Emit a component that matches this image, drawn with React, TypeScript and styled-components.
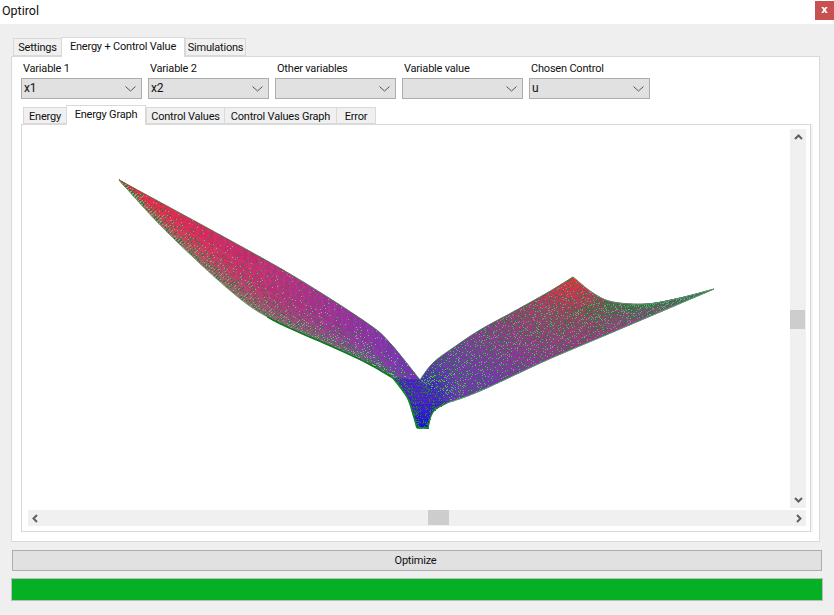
import React, { useMemo } from "react";
import styled, { createGlobalStyle } from "styled-components";

const Global = createGlobalStyle`
  html, body { margin: 0; padding: 0; background: #efefef; }
  body { font-family: Roboto, "Open Sans", "Liberation Sans", sans-serif; font-size: 11px; letter-spacing: -0.2px; color: #111; }
`;

const Window = styled.div`
  width: 834px; height: 615px; overflow: hidden; background: #efefef;
  display: flex; flex-direction: column;
`;
const TitleBar = styled.div`
  height: 24px; background: #fff; display: flex; align-items: flex-start; justify-content: space-between; flex: none;
`;
const Title = styled.span`
  font-size: 12.5px; letter-spacing: 0; line-height: 21px; padding-left: 2px;
`;
const CloseButton = styled.div`
  width: 19px; height: 19px; margin-top: 1px; background: #c75050; color: #fff; letter-spacing: 0;
  font: bold 10px/18px "DejaVu Sans", sans-serif; text-align: center;
`;
const Body = styled.div`
  flex: 1; padding: 12px 11px 0 11px; display: flex; flex-direction: column;
`;
const TabRow = styled.div<{ $inset: number; $h: number }>`
  display: flex; align-items: flex-end; height: ${p => p.$h}px; padding-left: ${p => p.$inset}px; position: relative; z-index: 1;
`;
const Tab = styled.div<{ $active?: boolean; $w: number; $h: number }>`
  box-sizing: border-box; width: ${p => p.$w}px; height: ${p => (p.$active ? p.$h + 2 : p.$h)}px;
  margin-bottom: ${p => (p.$active ? -1 : 0)}px;
  background: ${p => (p.$active ? "#fff" : "#f0f0f0")};
  border: 1px solid #d9d9d9; border-bottom: ${p => (p.$active ? "none" : "1px solid #d9d9d9")};
  border-right-width: ${p => (p.$active ? 1 : 0)}px;
  text-align: center; line-height: ${p => (p.$active ? p.$h - 1 : p.$h)}px; white-space: nowrap;
  &:last-child { border-right-width: 1px; }
`;
const OuterPanel = styled.div`
  box-sizing: border-box; width: 809px; height: 486px; background: #fff; border: 1px solid #d9d9d9;
  padding: 4px 0 0 9px; display: flex; flex-direction: column;
`;
const Selectors = styled.div`
  display: flex; gap: 6px; height: 38px; flex: none;
`;
const Field = styled.div`
  width: 121px; display: flex; flex-direction: column;
`;
const FieldLabel = styled.label`
  height: 17px; line-height: 16px; padding-left: 2px; white-space: nowrap;
`;
const Select = styled.div`
  box-sizing: border-box; height: 21px; background: #e1e1e1; border: 1px solid #adadad;
  display: flex; align-items: center; justify-content: space-between; padding: 0 5px 0 2px; line-height: 19px; font-size: 12px;
`;
const InnerTabs = styled.div`
  margin-top: 5px;
`;
const InnerPanel = styled.div`
  box-sizing: border-box; width: 790px; height: 408px; margin-left: 0; background: #fff;
  border: 1px solid #d9d9d9; box-shadow: 2px 0 0 #f3f3f3;
  padding: 4px 4px 5px 0;
  display: grid; grid-template-columns: 768px 16px; grid-template-rows: 379px 16px; row-gap: 2px;
`;
const PlotSvg = styled.svg`
  display: block; width: 768px; height: 379px;
`;
const VScroll = styled.div`
  background: #f0f0f0; display: flex; flex-direction: column; align-items: center; justify-content: space-between;
  position: relative; padding: 4px 0;
`;
const VThumb = styled.div`
  position: absolute; left: 0; top: 181px; width: 15px; height: 19px; background: #cdcdcd;
`;
const HScroll = styled.div`
  grid-column: 1 / -1; margin-left: 6px; background: #f0f0f0; display: flex; align-items: center; justify-content: space-between;
  position: relative; padding: 0 3px 0 3px;
`;
const HThumb = styled.div`
  position: absolute; left: 400px; top: 0; width: 21px; height: 15px; background: #cdcdcd;
`;
const OptimizeButton = styled.div`
  box-sizing: border-box; width: 810px; height: 21px; margin: 8px 0 0 1px; padding-right: 3px; background: #e1e1e1; border: 1px solid #adadad;
  text-align: center; line-height: 20px;
`;
const Progress = styled.div`
  box-sizing: border-box; width: 812px; height: 23px; margin-top: 7px; background: #06b025; border: 1px solid #bcbcbc;
`;

type P = [number, number];

const smooth = (line: P[]): P[] => {
  const out: P[] = [];
  for (let i = 0; i < line.length - 1; i++) {
    const p0 = line[Math.max(0, i - 1)], p1 = line[i], p2 = line[i + 1], p3 = line[Math.min(line.length - 1, i + 2)];
    for (let k = 0; k < 8; k++) {
      const t = k / 8, t2 = t * t, t3 = t2 * t;
      out.push([
        0.5 * (2 * p1[0] + (p2[0] - p0[0]) * t + (2 * p0[0] - 5 * p1[0] + 4 * p2[0] - p3[0]) * t2 + (3 * p1[0] - p0[0] - 3 * p2[0] + p3[0]) * t3),
        0.5 * (2 * p1[1] + (p2[1] - p0[1]) * t + (2 * p0[1] - 5 * p1[1] + 4 * p2[1] - p3[1]) * t2 + (3 * p1[1] - p0[1] - 3 * p2[1] + p3[1]) * t3),
      ]);
    }
  }
  out.push(line[line.length - 1]);
  return out;
};

const at = (line: P[], t: number): P => {
  const lens: number[] = [];
  let total = 0;
  for (let i = 1; i < line.length; i++) {
    const l = Math.hypot(line[i][0] - line[i - 1][0], line[i][1] - line[i - 1][1]);
    lens.push(l); total += l;
  }
  let d = t * total;
  for (let i = 0; i < lens.length; i++) {
    if (d <= lens[i] || i === lens.length - 1) {
      const f = lens[i] ? d / lens[i] : 0;
      return [line[i][0] + (line[i + 1][0] - line[i][0]) * f, line[i][1] + (line[i + 1][1] - line[i][1]) * f];
    }
    d -= lens[i];
  }
  return line[line.length - 1];
};
type C = [number, number, number];
const mix = (a: C, b: C, t: number): C => {
  const k = Math.max(0, Math.min(1, t));
  return [a[0] + (b[0] - a[0]) * k, a[1] + (b[1] - a[1]) * k, a[2] + (b[2] - a[2]) * k];
};
const RED: C = [245, 40, 65];
const PINK: C = [195, 45, 115];
const PURPLE: C = [128, 50, 180];
const BLUE: C = [60, 20, 205];

const LEFT_UP = smooth([[119, 180], [233, 242], [300, 280], [367, 323], [390, 343], [420, 380]]);
const LEFT_LOW = smooth([[119, 180], [167, 232], [233, 293], [273, 320], [333, 347], [367, 363], [393, 378]]);
const RIGHT_A = smooth([[420, 380], [433, 363], [453, 348], [480, 330], [513, 312], [547, 293], [573, 277]]);
const RIGHT_B = smooth([[447, 403], [480, 391], [547, 360], [613, 332], [714, 289]]);
const RIGHT_C = smooth([[573, 277], [593, 293], [613, 302], [647, 304], [680, 298], [714, 289]]);
const MID_L = smooth([[393, 378], [407, 397], [413, 414], [417, 428]]);
const MID_R = smooth([[420, 380], [447, 403]]).concat(smooth([[447, 403], [436, 409], [431, 416], [428, 428]]).slice(1));

const rnd = (i: number, j: number) => {
  const s = Math.sin(i * 12.9898 + j * 78.233) * 43758.5453;
  return s - Math.floor(s);
};

type Surface = {
  nu: number; nv: number;
  pos: (u: number, v: number) => P;
  col: (u: number, v: number, p: P) => C;
  dots: (u: number, v: number) => number;
  step: number;
};

const build = (s: Surface) => {
  const fills = new Map<string, string>();
  let lines = "";
  let dots = "";
  let greens = "";
  for (let i = 0; i < s.nu; i++) {
    for (let j = 0; j < s.nv; j++) {
      const u0 = i / s.nu, u1 = (i + 1) / s.nu, v0 = j / s.nv, v1 = (j + 1) / s.nv;
      const a = s.pos(u0, v0), b = s.pos(u1, v0), c = s.pos(u1, v1), d = s.pos(u0, v1);
      const mid: P = [(a[0] + c[0]) / 2, (a[1] + c[1]) / 2];
      const cc = s.col((u0 + u1) / 2, (v0 + v1) / 2, mid);
      const key = `rgb(${Math.round(cc[0] / 6) * 6},${Math.round(cc[1] / 6) * 6},${Math.round(cc[2] / 6) * 6})`;
      const q = `M${a[0].toFixed(1)} ${a[1].toFixed(1)}L${b[0].toFixed(1)} ${b[1].toFixed(1)}L${c[0].toFixed(1)} ${c[1].toFixed(1)}L${d[0].toFixed(1)} ${d[1].toFixed(1)}Z`;
      fills.set(key, (fills.get(key) || "") + q);
      if (i % s.step === 0) lines += `M${a[0].toFixed(1)} ${a[1].toFixed(1)}L${d[0].toFixed(1)} ${d[1].toFixed(1)}`;
      if (rnd(i, j) < s.dots((u0 + u1) / 2, (v0 + v1) / 2)) dots += `M${Math.round(mid[0])} ${Math.round(mid[1]) + 0.5}h1`;
      if (rnd(j + 3, i + 7) < s.dots((u0 + u1) / 2, (v0 + v1) / 2)) greens += `M${Math.round(b[0])} ${Math.round(b[1]) + 0.5}h1`;
    }
  }
  return { fills: Array.from(fills.entries()), lines, dots, greens };
};

const leftWing: Surface = {
  nu: 120, nv: 28, step: 3,
  pos: (u, v) => {
    const a = at(LEFT_UP, u), b = at(LEFT_LOW, u);
    const w = Math.pow(v, 0.8);
    return [a[0] + (b[0] - a[0]) * w, a[1] + (b[1] - a[1]) * w];
  },
  col: (u, v, p) => {
    const x = (p[0] - 119) / (400 - 119);
    const base = x < 0.5 ? mix(RED, PINK, x * 2) : mix(PINK, PURPLE, (x - 0.5) * 2);
    return mix(base, [80, 150, 90], Math.pow(v, 3) * 0.55);
  },
  dots: (u, v) => 0.06 + u * 0.06 + v * v * 0.35,
};

const rightWing: Surface = {
  nu: 110, nv: 36, step: 2,
  pos: (u, v) => {
    const a = at(RIGHT_A, u), b = at(RIGHT_B, u), c = at(RIGHT_C, v);
    const lx = 573 + (714 - 573) * v, ly = 277 + (289 - 277) * v;
    const k = Math.pow(u, 4);
    return [a[0] + (b[0] - a[0]) * v + (c[0] - lx) * k, a[1] + (b[1] - a[1]) * v + (c[1] - ly) * k];
  },
  col: (u, v, p) => {
    const dp = Math.hypot(p[0] - 573, (p[1] - 277) * 1.4);
    const base = mix(RED, PINK, dp / 50);
    const far = mix(base, PURPLE, (dp - 45) / 120);
    const tip = mix(far, [150, 75, 150], (p[0] - 580) / 130);
    return mix(BLUE, tip, (Math.hypot(p[0] - 425, p[1] - 395) - 5) / 35);
  },
  dots: () => 0.3,
};

const midPiece: Surface = {
  nu: 26, nv: 22, step: 2,
  pos: (u, v) => {
    const a = at(MID_L, u), b = at(MID_R, u);
    return [a[0] + (b[0] - a[0]) * v, a[1] + (b[1] - a[1]) * v];
  },
  col: (u) => mix(mix(PURPLE, BLUE, 0.75), [30, 15, 225], (u - 0.5) * 2),
  dots: (u, v) => 0.38 * (Math.abs(v - 0.5) * 2) + 0.04,
};

const Chevron = ({ dir }: { dir: "up" | "down" | "left" | "right" }) => {
  const d = {
    up: "M1 6 L4.5 2.5 L8 6",
    down: "M1 3 L4.5 6.5 L8 3",
    left: "M6 1 L2.5 4.5 L6 8",
    right: "M3 1 L6.5 4.5 L3 8",
  }[dir];
  return (
    <svg width="9" height="9" viewBox="0 0 9 9" fill="none">
      <path d={d} stroke="#606060" strokeWidth="2" />
    </svg>
  );
};

const DropArrow = () => (
  <svg width="11" height="6" viewBox="0 0 11 6" fill="none">
    <path d="M0.5 0.5 L5.5 5 L10.5 0.5" stroke="#555" strokeWidth="1" />
  </svg>
);

const Mesh = ({ s, lineOpacity, dotColor }: { s: Surface; lineOpacity: number; dotColor: string }) => {
  const m = useMemo(() => build(s), [s]);
  return (
    <g>
      {m.fills.map(([c, d]) => (
        <path key={c} d={d} fill={c} stroke={c} strokeWidth="0.5" />
      ))}
      <path d={m.lines} fill="none" stroke="#0d8a2a" strokeOpacity={lineOpacity} strokeWidth="1" shapeRendering="crispEdges" />
      <path d={m.greens} fill="none" stroke="#12802c" strokeWidth="1" shapeRendering="crispEdges" />
      <path d={m.dots} fill="none" stroke={dotColor} strokeWidth="1" shapeRendering="crispEdges" />
    </g>
  );
};

const pts = (l: P[]) => l.map(p => p.join(",")).join(" ");

const Plot = () => (
  <PlotSvg viewBox="22 129 768 379">
    <Mesh s={rightWing} lineOpacity={0.5} dotColor="#6aa87c" />
    <polyline points={pts(RIGHT_B)} fill="none" stroke="#4fa065" strokeWidth="1" />
    <polyline points={pts(RIGHT_C)} fill="none" stroke="#4f9a65" strokeWidth="1" />
    <polyline points={pts(RIGHT_A)} fill="none" stroke="#2f8a45" strokeWidth="0.8" />
    <Mesh s={leftWing} lineOpacity={0.3} dotColor="#7fb08c" />
    <polyline points={pts(LEFT_UP)} fill="none" stroke="#2f7f3f" strokeWidth="0.7" />
    <polyline points={pts(LEFT_LOW.slice(0, 24))} fill="none" stroke="#5faf6f" strokeWidth="0.6" />
    <polyline points={pts(LEFT_LOW.slice(23))} fill="none" stroke="#0a7a1a" strokeWidth="1.6" />
    <Mesh s={midPiece} lineOpacity={0.25} dotColor="#2a8a3a" />
    <polyline points={pts(MID_L)} fill="none" stroke="#0f8a22" strokeWidth="1.6" />
    <polyline points={pts(MID_R.slice(8))} fill="none" stroke="#2a8a3a" strokeWidth="1.2" />
    <polyline points="417,428 428,428" fill="none" stroke="#1a8a2a" strokeWidth="1.5" />
  </PlotSvg>
);

const fields = [
  { label: "Variable 1", value: "x1" },
  { label: "Variable 2", value: "x2" },
  { label: "Other variables", value: "" },
  { label: "Variable value", value: "" },
  { label: "Chosen Control", value: "u" },
];

export default function App() {
  return (
    <Window>
      <Global />
      <TitleBar>
        <Title>Optirol</Title>
        <CloseButton>x</CloseButton>
      </TitleBar>
      <Body>
        <TabRow $inset={2} $h={20}>
          <Tab $w={48} $h={18}>Settings</Tab>
          <Tab $w={124} $h={18} $active>Energy + Control Value</Tab>
          <Tab $w={61} $h={18}>Simulations</Tab>
        </TabRow>
        <OuterPanel>
          <Selectors>
            {fields.map(f => (
              <Field key={f.label}>
                <FieldLabel>{f.label}</FieldLabel>
                <Select>
                  <span>{f.value}</span>
                  <DropArrow />
                </Select>
              </Field>
            ))}
          </Selectors>
          <InnerTabs>
            <TabRow $inset={2} $h={20}>
              <Tab $w={43} $h={17}>Energy</Tab>
              <Tab $w={80} $h={18} $active>Energy Graph</Tab>
              <Tab $w={78} $h={17}>Control Values</Tab>
              <Tab $w={112} $h={17}>Control Values Graph</Tab>
              <Tab $w={40} $h={17}>Error</Tab>
            </TabRow>
            <InnerPanel>
              <Plot />
              <VScroll>
                <Chevron dir="up" />
                <VThumb />
                <Chevron dir="down" />
              </VScroll>
              <HScroll>
                <Chevron dir="left" />
                <HThumb />
                <Chevron dir="right" />
              </HScroll>
            </InnerPanel>
          </InnerTabs>
        </OuterPanel>
        <OptimizeButton>Optimize</OptimizeButton>
        <Progress />
      </Body>
    </Window>
  );
}
